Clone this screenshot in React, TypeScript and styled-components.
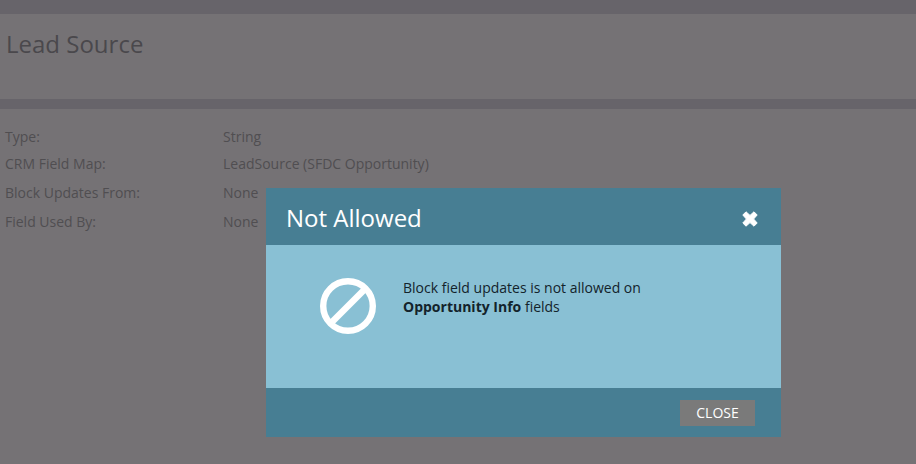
import React from "react";
import styled, { createGlobalStyle } from "styled-components";

const Global = createGlobalStyle`
  html, body { margin: 0; padding: 0; }
  body { background: #757275; font-family: "Open Sans", "Liberation Sans", sans-serif; overflow: hidden; }
`;

const Page = styled.div`
  position: relative;
  width: 916px;
  height: 464px;
  overflow: hidden;
  background: #757275;
`;
const Band = styled.div<{ $h: number }>`
  height: ${(p) => p.$h}px;
  background: #67646a;
`;
const TitleArea = styled.div`
  height: 85px;
  box-sizing: border-box;
  padding: 14px 0 0 6px;
`;
const Title = styled.h1`
  margin: 0;
  font-size: 24px;
  font-weight: 400;
  line-height: 32px;
  color: #4a484c;
`;
const Fields = styled.div`
  display: flex;
  flex-direction: column;
  padding: 17px 0 0 5px;
`;
const Row = styled.div<{ $h: number }>`
  display: grid;
  grid-template-columns: 218px 1fr;
  height: ${(p) => p.$h}px;
  font-size: 14px;
  line-height: 22px;
  color: #504e51;
`;
const Modal = styled.div`
  position: absolute;
  left: 266px;
  top: 188px;
  width: 515px;
  height: 249px;
  display: flex;
  flex-direction: column;
  background: #477e93;
`;
const Header = styled.div`
  height: 57px;
  flex: none;
  display: flex;
  align-items: center;
  justify-content: space-between;
  padding: 0 23px 0 20px;
`;
const ModalTitle = styled.div`
  font-size: 24px;
  line-height: 32px;
  color: #ffffff;
  margin-top: 2px;
`;
const CloseIcon = styled.svg`
  width: 16px;
  height: 16px;
  margin-top: 4px;
  display: block;
`;
const Body = styled.div`
  height: 143px;
  flex: none;
  box-sizing: border-box;
  background: #89c0d4;
  display: flex;
  align-items: flex-start;
  padding: 33px 0 0 54px;
`;
const BlockIcon = styled.svg`
  width: 56px;
  height: 56px;
  flex: none;
  display: block;
`;
const Message = styled.div`
  margin: 0 0 0 27px;
  font-size: 14px;
  line-height: 19px;
  color: #13232b;
`;
const Footer = styled.div`
  flex: 1;
  display: flex;
  justify-content: flex-end;
  align-items: flex-start;
  padding: 12px 26px 0 0;
`;
const CloseButton = styled.button`
  width: 75px;
  height: 26px;
  border: 0;
  padding: 0;
  background: #7a7a7a;
  color: #ffffff;
  font-family: inherit;
  font-size: 14px;
  line-height: 26px;
`;

const rows: [string, string, number][] = [
  ["Type:", "String", 27],
  ["CRM Field Map:", "LeadSource (SFDC Opportunity)", 29],
  ["Block Updates From:", "None", 29],
  ["Field Used By:", "None", 29],
];

export default function App() {
  return (
    <Page>
      <Global />
      <Band $h={14} />
      <TitleArea>
        <Title>Lead Source</Title>
      </TitleArea>
      <Band $h={10} />
      <Fields>
        {rows.map(([label, value, h]) => (
          <Row key={label} $h={h}>
            <span>{label}</span>
            <span>{value}</span>
          </Row>
        ))}
      </Fields>
      <Modal>
        <Header>
          <ModalTitle>Not Allowed</ModalTitle>
          <CloseIcon viewBox="0 0 16 16">
            <path
              d="M4 0.8 L8 4.4 L12 0.8 L15.2 4 L11.6 8 L15.2 12 L12 15.2 L8 11.6 L4 15.2 L0.8 12 L4.4 8 L0.8 4 Z"
              fill="#fff"
              stroke="#fff"
              strokeWidth="1"
              strokeLinejoin="round"
            />
          </CloseIcon>
        </Header>
        <Body>
          <BlockIcon viewBox="0 0 56 56">
            <circle cx="28" cy="28" r="24.8" fill="none" stroke="#fff" strokeWidth="6.4" />
            <path d="M10 46 L46 10" stroke="#fff" strokeWidth="6.5" />
          </BlockIcon>
          <Message>
            Block field updates is not allowed on
            <br />
            <b>Opportunity Info</b> fields
          </Message>
        </Body>
        <Footer>
          <CloseButton>CLOSE</CloseButton>
        </Footer>
      </Modal>
    </Page>
  );
}
